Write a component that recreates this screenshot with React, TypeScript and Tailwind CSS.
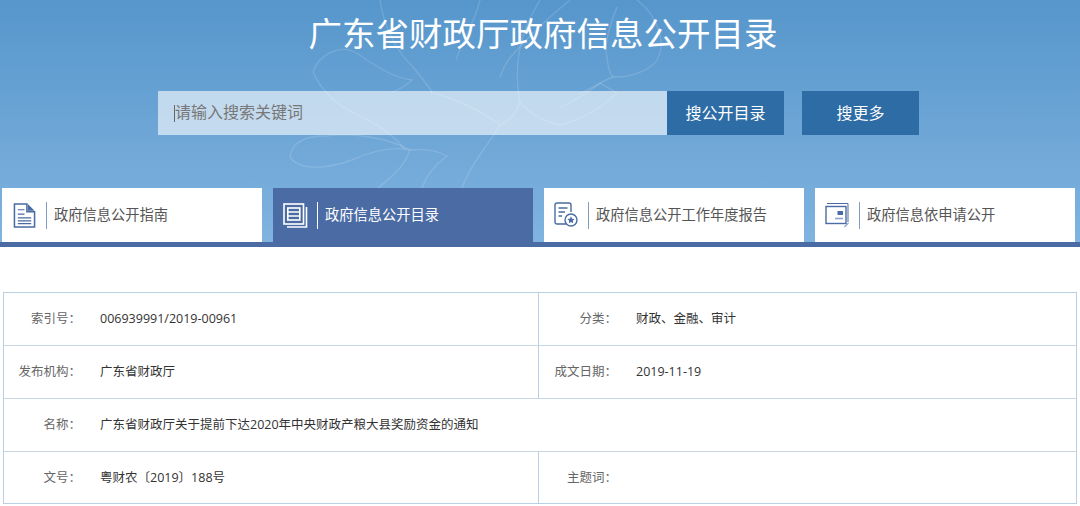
const FONT = 'font-["Open_Sans","Noto_Sans_CJK_SC",sans-serif]';

function GuideIcon() {
  return (
    <svg width="23" height="25" viewBox="0 0 24 26" fill="none" stroke="#4a6ba3" strokeWidth="1.6">
      <path d="M14.5 1H1.5V25H22.5V9H14.5Z" />
      <path d="M15.5 1L22.5 8H15.5Z" fill="#4a6ba3" stroke="none" />
      <path d="M5 7H12M5 11.5H12M5 15.5H19M5 18.5H19M5 21.5H19" strokeWidth="1.3" />
    </svg>
  );
}

function CatalogIcon() {
  return (
    <svg width="25" height="25" viewBox="0 0 25 25" fill="none" stroke="#ffffff" strokeWidth="1.6">
      <rect x="1" y="1" width="19.5" height="20" />
      <path d="M23.5 4V24H4" />
      <rect x="4.8" y="5" width="12" height="12" />
      <path d="M5 9H16.5M5 13H16.5" strokeWidth="1.5" />
    </svg>
  );
}

function ReportIcon() {
  return (
    <svg width="24" height="26" viewBox="0 0 24 26" fill="none" stroke="#4a6ba3" strokeWidth="1.4">
      <path d="M12 22H3C1.9 22 1 21.1 1 20V3C1 1.9 1.9 1 3 1H15C16.1 1 17 1.9 17 3V10" />
      <path d="M4.5 6H13.5M4.5 10H11M4.5 14H8" />
      <circle cx="17" cy="18" r="6" />
      <path d="M17 14.3L18.1 16.7L20.6 17L18.8 18.7L19.2 21.2L17 20L14.8 21.2L15.2 18.7L13.4 17L15.9 16.7Z" fill="#4a6ba3" stroke="none" />
    </svg>
  );
}

function ApplyIcon() {
  return (
    <svg width="25" height="26" viewBox="0 0 25 26" fill="none" stroke="#4a6ba3" strokeWidth="1.4">
      <path d="M2 1.5H23V20" strokeWidth="1" />
      <rect x="1" y="4.5" width="20" height="17" />
      <rect x="12.5" y="9" width="5.5" height="4" fill="#4a6ba3" stroke="none" />
      <path d="M10 16.5H18" strokeWidth="1.6" stroke="#8fa5c8" />
      <path d="M19.5 25L23.5 21" strokeWidth="1.2" stroke="#8fa5c8" />
    </svg>
  );
}

function Flower() {
  return (
    <svg
      className="absolute left-0 top-0 pointer-events-none"
      width="1080"
      height="242"
      viewBox="0 0 1080 242"
      fill="none"
      stroke="#ffffff"
      strokeOpacity="0.14"
      strokeWidth="1.4"
    >
      <path d="M380 0C384 30 400 55 413 67C420 76 428 85 432 92" />
      <path d="M313 72C318 56 340 42 358 54C378 68 395 78 412 80C405 86 400 90 392 92" />
      <path d="M313 72C322 92 338 105 352 112C372 122 390 130 405 150" />
      <path d="M290 157C292 140 310 136 326 136C352 132 388 138 410 150C404 168 392 176 378 188" />
      <path d="M290 157C300 172 330 168 352 160C370 152 392 146 410 150" />
      <path d="M410 150C430 148 440 152 447 156C436 164 426 176 422 188" />
      <path d="M500 77C505 62 512 55 517 50C535 30 555 12 570 0" />
      <path d="M430 92C460 100 480 110 500 125C515 118 518 108 520 103C532 115 545 122 560 125C580 120 602 108 617 93C608 88 604 85 600 83C590 92 575 100 560 108" />
      <path d="M540 0C522 30 512 60 520 103" />
      <path d="M617 7C608 30 604 48 607 57C608 68 610 74 613 77C634 78 652 68 657 60C662 50 662 44 660 34C656 20 648 8 637 0" />
      <path d="M613 77C600 82 590 90 578 94" />
      <path d="M500 125C488 145 470 165 462 188" />
      <path d="M480 0C474 25 462 42 456 60" />
    </svg>
  );
}

const TABS = [
  { label: "政府信息公开指南", Icon: GuideIcon, active: false },
  { label: "政府信息公开目录", Icon: CatalogIcon, active: true },
  { label: "政府信息公开工作年度报告", Icon: ReportIcon, active: false },
  { label: "政府信息依申请公开", Icon: ApplyIcon, active: false },
];

function Cell({ label, value }: { label: string; value: string }) {
  return (
    <div className="flex items-center pt-px">
      <span className="w-[77px] text-right text-[#666666]">{label}</span>
      <span className="ml-[19px] text-[#333333]">{value}</span>
    </div>
  );
}

function Row({ l1, v1, l2, v2, last }: { l1: string; v1: string; l2?: string; v2?: string; last?: boolean }) {
  return (
    <div className={`flex items-center ${last ? "h-[51px]" : "h-[53px] border-b border-[#c5d6e6]"}`}>
      {l2 === undefined ? (
        <Cell label={l1} value={v1} />
      ) : (
        <>
          <div className="flex h-full w-[535px] shrink-0 items-center border-r border-[#b9cfe3]">
            <Cell label={l1} value={v1} />
          </div>
          <div className="pl-px">
            <Cell label={l2} value={v2 ?? ""} />
          </div>
        </>
      )}
    </div>
  );
}

export default function App() {
  return (
    <div className={`h-[506px] w-[1080px] overflow-hidden bg-white ${FONT}`}>
      <header className="relative h-[247px] border-b-[5px] border-[#4a6ba3] bg-gradient-to-b from-[#5696cb] to-[#80b3e0]">
        <Flower />
        <div className="relative flex flex-col">
          <h1 className="pt-[10px] pl-[6px] text-center text-[33.5px] leading-[46px] font-normal text-white">
            广东省财政厅政府信息公开目录
          </h1>
          <div className="mt-[35px] ml-[158px] flex h-[44px]">
            <div className="flex w-[509px] items-center bg-white/60 pl-[16px] text-[16px] text-[#777777]">
              <span className="h-[17px] w-px bg-[#666666]" />
              <span className="-mt-[2px]">请输入搜索关键词</span>
            </div>
            <div className="flex w-[117px] items-center justify-center bg-[#2d6ca5] text-[16px] text-white">
              搜公开目录
            </div>
            <div className="ml-[18px] flex w-[117px] items-center justify-center bg-[#2d6ca5] text-[16px] text-white">
              搜更多
            </div>
          </div>
          <nav className="mt-[53px] ml-[2px] flex gap-[11px]">
            {TABS.map(({ label, Icon, active }) => (
              <div
                key={label}
                className={`flex w-[260px] items-center pl-[9px] text-[14.25px] ${
                  active ? "-mb-[5px] h-[59px] bg-[#4a6ba3] pb-[5px] text-white" : "h-[54px] bg-white text-[#555555]"
                }`}
              >
                <span className="flex w-[26px] justify-center">
                  <Icon />
                </span>
                <span className={`ml-[9px] h-[27px] w-px ${active ? "bg-white" : "bg-[#7f9dc4]"}`} />
                <span className="ml-[7px] -mt-px">{label}</span>
              </div>
            ))}
          </nav>
        </div>
      </header>
      <section className="mx-[3px] mt-[45px] h-[212px] border border-[#b9cfe3] text-[12.5px]">
        <Row l1="索引号：" v1="006939991/2019-00961" l2="分类：" v2="财政、金融、审计" />
        <Row l1="发布机构：" v1="广东省财政厅" l2="成文日期：" v2="2019-11-19" />
        <Row l1="名称：" v1="广东省财政厅关于提前下达2020年中央财政产粮大县奖励资金的通知" />
        <Row l1="文号：" v1="粤财农〔2019〕188号" l2="主题词：" v2="" last />
      </section>
    </div>
  );
}
